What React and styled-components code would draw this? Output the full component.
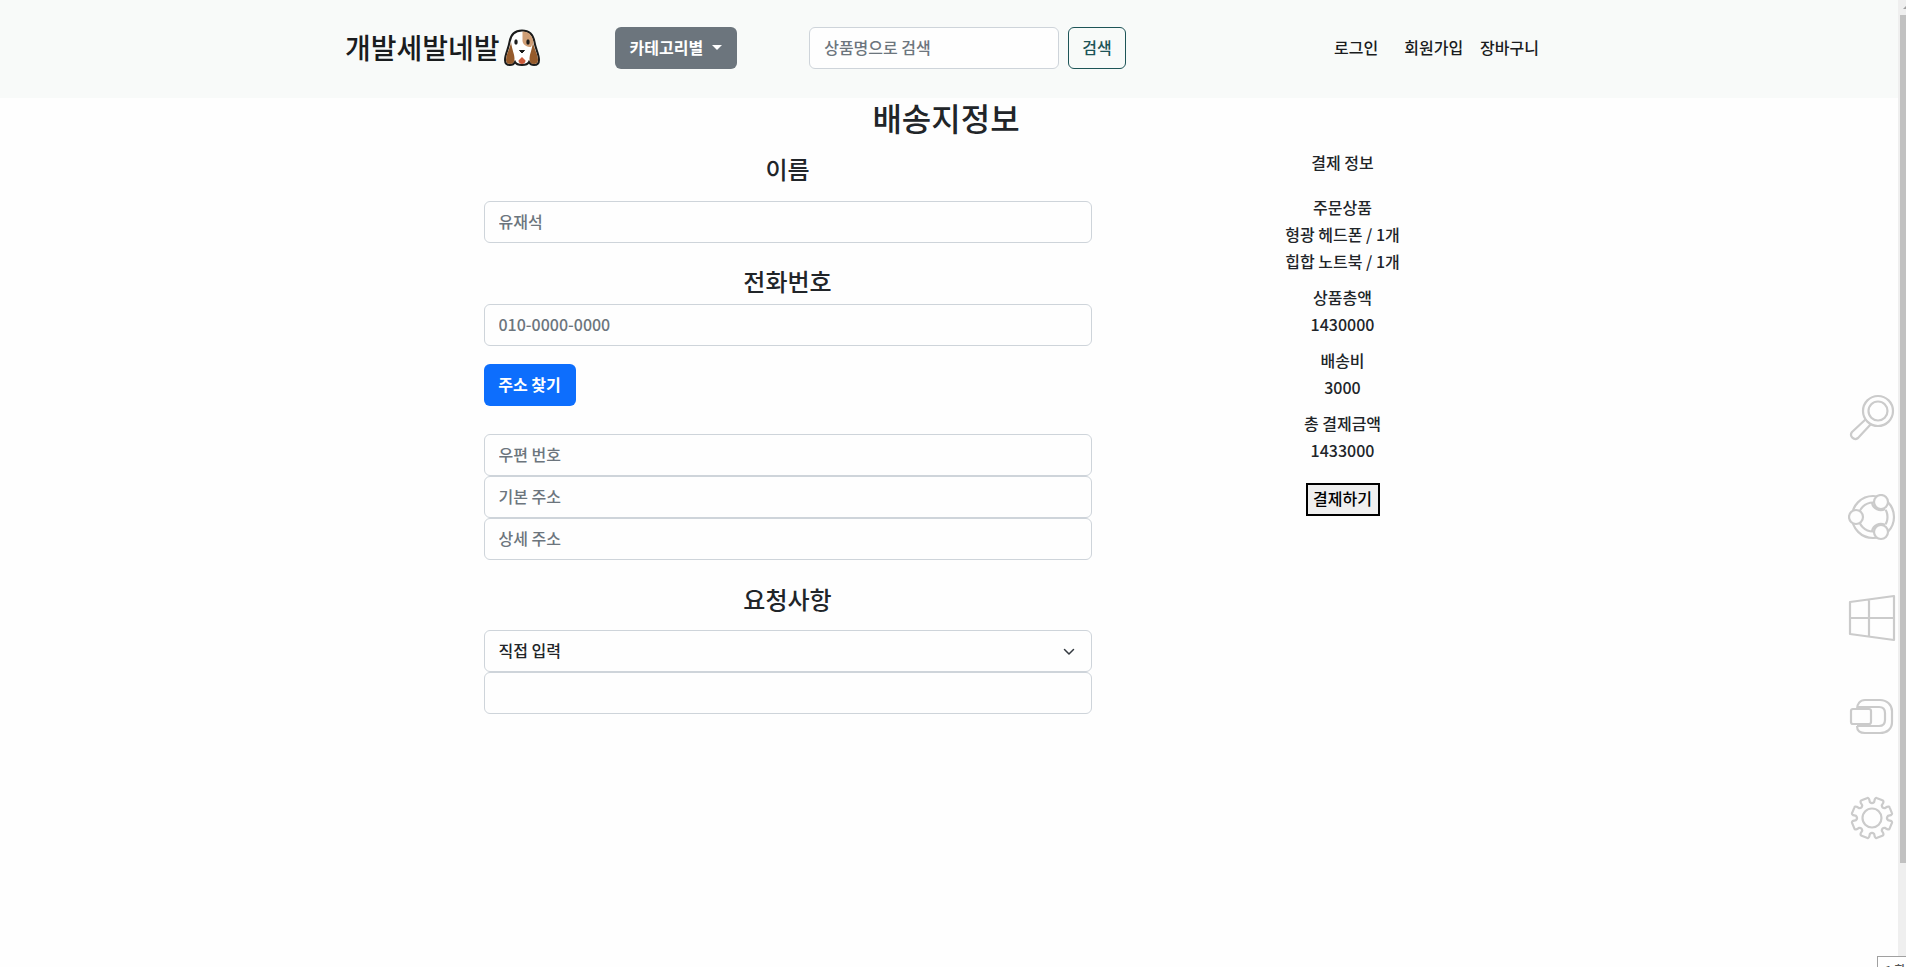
import React, { useState } from "react";
import styled, { createGlobalStyle, css } from "styled-components";

const Global = createGlobalStyle`
  *, *::before, *::after { box-sizing: border-box; }
  html, body { margin: 0; background: #fefefe; }
  body, button, input, select {
    font-family: "Noto Sans CJK KR", "Noto Sans", sans-serif;
    font-size: 16px;
    font-weight: 500;
    line-height: 24px;
    color: #212529;
  }
  h1, h2, p, ul { margin: 0; padding: 0; font-weight: 500; }
`;

const Page = styled.div`
  min-height: 100vh;
  padding-right: 8px;
  overflow: hidden;
`;

const Header = styled.header`
  background: #f8faf9;
`;

const Bar = styled.div`
  display: flex;
  align-items: center;
  width: 100%;
  max-width: 1208px;
  height: 98px;
  margin: 0 auto;
  padding: 0 14px 2px 0;
`;

const Brand = styled.a`
  display: flex;
  align-items: center;
  gap: 4px;
  margin-right: 75px;
  padding-bottom: 2px;
  font-size: 28px;
  line-height: 40px;
  color: #1a1c1e;
  text-decoration: none;
  white-space: nowrap;
`;

const Button = styled.button`
  height: 42px;
  padding: 0 13px 2px;
  border: 1px solid transparent;
  border-radius: 6px;
  white-space: nowrap;
  ${({ $kind }) =>
    $kind === "menu" &&
    css`
      display: flex;
      align-items: center;
      gap: 9px;
      margin-right: 72px;
      padding: 0 14px 2px;
      background: #6c757d;
      color: #fff;
      font-weight: 700;
    `}
  ${({ $kind }) =>
    $kind === "outline" &&
    css`
      background: transparent;
      border-color: #1d5457;
      color: #1d5457;
    `}
  ${({ $kind }) =>
    $kind === "primary" &&
    css`
      align-self: flex-start;
      margin: 18px 0 28px;
      min-width: 92px;
      background: #0d6efd;
      color: #fff;
      font-weight: 700;
    `}
`;

const Caret = styled.span`
  border: 5px solid transparent;
  border-top-color: currentColor;
  border-bottom: 0;
`;

const Search = styled.form`
  display: flex;
  gap: 9px;
`;

const Field = styled.input`
  display: block;
  width: ${({ $width }) => $width || "100%"};
  height: 42px;
  padding: 0 14px 2px;
  border: 1px solid #ced4da;
  border-radius: 6px;
  background: #fefefe;
  outline: none;
  appearance: none;
  &::placeholder { color: #6c757d; opacity: 1; }
`;

const Nav = styled.nav`
  display: flex;
  margin-left: auto;
  padding-bottom: 2px;
  gap: 17px;
`;

const NavLink = styled.a`
  color: #1a1c1e;
  text-decoration: none;
  white-space: nowrap;
  &:first-child { margin-right: 9px; }
`;

const Title = styled.h1`
  padding: 0 6px 4px 0;
  font-size: 32px;
  line-height: 38px;
  text-align: center;
`;

const Columns = styled.main`
  display: grid;
  grid-template-columns: 608px 228px;
  column-gap: 137px;
  justify-content: center;
  padding-left: 42px;
`;

const Form = styled.form`
  display: flex;
  flex-direction: column;
`;

const Label = styled.label`
  padding: ${({ $pad }) => $pad};
  font-size: 24px;
  line-height: 30px;
  text-align: center;
`;

const SelectBox = styled.div`
  position: relative;
  svg {
    position: absolute;
    right: 14px;
    top: 15px;
    pointer-events: none;
  }
`;

const Summary = styled.aside`
  display: flex;
  flex-direction: column;
  align-items: center;
  gap: 9px;
  padding-top: 9px;
  text-align: center;
  line-height: 27px;
`;

const SummaryTitle = styled.h2`
  margin-bottom: 9px;
  font-size: 16px;
  line-height: 27px;
`;

const PayButton = styled.button`
  height: 33px;
  min-width: 74px;
  margin-top: 10px;
  padding: 0 5px 3px;
  border: 2px solid #000;
  background: #efefef;
  color: #000;
  white-space: nowrap;
`;

const Charms = styled.div`
  position: fixed;
  right: 10px;
  top: 394px;
  display: flex;
  flex-direction: column;
  gap: 52px;
  svg { display: block; }
`;

const ScrollTrack = styled.div`
  position: fixed;
  inset: 0 0 0 auto;
  width: 8px;
  padding: 15px 0 104px 2px;
  background: #efefef;
`;

const ScrollThumb = styled.div`
  height: 100%;
  background: #c1c1c1;
`;

const ScrollArrow = styled.svg`
  position: absolute;
  right: 0;
  top: 6px;
`;

const Tip = styled.div`
  position: fixed;
  right: 0;
  bottom: 0;
  width: 29px;
  height: 11px;
  padding: 5px 0 0 7px;
  overflow: hidden;
  border: 1px solid #a0a0a0;
  border-width: 1px 0 0 1px;
  background: #fff;
  color: #555;
  font-size: 12px;
  line-height: 16px;
  white-space: nowrap;
`;

const Dog = () => (
  <svg width="36" height="37" viewBox="0 0 36 37" aria-hidden="true">
    <path d="M18 1.5C10 1.5 6.500 7 5.500 13C4.500 20 1 25 1 31c0 3 2 5 5 5 2.500 0 4-1 5-3 1 2 3 3 7 3s6-1 7-3c1 2 2.500 3 5 3 3 0 5-2 5-5 0-6-3.500-11-4.500-18C29.500 7 26 1.500 18 1.500Z" fill="#fff" stroke="#1c1c1c" strokeWidth="2" />
    <path d="M18.500 2.500c7 0 10 5 11 10.500L27 18c-4 0-8-2-8.500-6Z" fill="#cf9e76" />
    <path d="M7 13C6 20 2 25 2 31c0 2.500 1.500 4 4 4 3 0 4.500-2 4.500-5 0-5-2.500-9-3.500-17ZM29 13c1 7 5 12 5 18 0 2.500-1.500 4-4 4-3 0-4.500-2-4.500-5 0-5 2.500-9 3.500-17Z" fill="#955a2b" />
    <ellipse cx="12" cy="13" rx="1.700" ry="2.800" fill="#1c1c1c" />
    <ellipse cx="24" cy="13" rx="1.700" ry="2.800" fill="#1c1c1c" />
    <path d="M15.500 21.500h5L18 24Z" fill="#1c1c1c" stroke="#1c1c1c" strokeLinejoin="round" />
    <path d="M18 28l3.500 3.500c0 2-1.500 3.500-3.500 3.500s-3.500-1.500-3.500-3.500Z" fill="#cb5a3a" />
  </svg>
);

const Charm = ({ children }) => (
  <svg width="48" height="48" viewBox="0 0 48 48" fill="none" stroke="#cbcbcb" strokeWidth="2.2" strokeLinejoin="round" aria-hidden="true">
    {children}
  </svg>
);

const gearPoints = () => {
  let d = "";
  for (let i = 0; i < 8; i++) {
    const at = (deg, r) => {
      const a = ((i * 45 + 22.5 + deg) * Math.PI) / 180;
      return `${(24 + r * Math.cos(a)).toFixed(2)} ${(24 + r * Math.sin(a)).toFixed(2)}`;
    };
    d += `${i ? "L" : "M"}${at(-15, 16)}L${at(-14, 19)}Q${at(-12, 21)} ${at(-8, 20.5)}L${at(8, 20.5)}Q${at(12, 21)} ${at(14, 19)}L${at(15, 16)}Q${at(22.5, 14)} ${at(30, 16)}`;
  }
  return d + "Z";
};

const groups = [
  ["주문상품", "형광 헤드폰 / 1개", "힙합 노트북 / 1개"],
  ["상품총액", "1430000"],
  ["배송비", "3000"],
  ["총 결제금액", "1433000"],
];

export default function App() {
  const [request, setRequest] = useState("직접 입력");
  return (
    <Page>
      <Global />
      <Header>
        <Bar>
          <Brand href="#home">
            개발세발네발
            <Dog />
          </Brand>
          <Button type="button" $kind="menu">
            카테고리별 <Caret />
          </Button>
          <Search onSubmit={(e) => e.preventDefault()}>
            <Field $width="250px" type="search" placeholder="상품명으로 검색" aria-label="상품명으로 검색" />
            <Button $kind="outline">검색</Button>
          </Search>
          <Nav>
            <NavLink href="#login">로그인</NavLink>
            <NavLink href="#join">회원가입</NavLink>
            <NavLink href="#cart">장바구니</NavLink>
          </Nav>
        </Bar>
      </Header>
      <Title>배송지정보</Title>
      <Columns>
        <Form onSubmit={(e) => e.preventDefault()}>
          <Label htmlFor="name" $pad="14px 0 17px">이름</Label>
          <Field id="name" placeholder="유재석" />
          <Label htmlFor="phone" $pad="23px 0 8px">전화번호</Label>
          <Field id="phone" placeholder="010-0000-0000" />
          <Button type="button" $kind="primary">주소 찾기</Button>
          <Field placeholder="우편 번호" aria-label="우편 번호" />
          <Field placeholder="기본 주소" aria-label="기본 주소" />
          <Field placeholder="상세 주소" aria-label="상세 주소" />
          <Label htmlFor="request" $pad="24px 0 16px">요청사항</Label>
          <SelectBox>
            <Field as="select" id="request" value={request} onChange={(e) => setRequest(e.target.value)}>
              <option>직접 입력</option>
            </Field>
            <svg width="18" height="14" viewBox="0 0 18 14" fill="none" stroke="#343a40" strokeWidth="1.5" strokeLinecap="round" strokeLinejoin="round" aria-hidden="true">
              <path d="M4.500 4.500l4.500 4.500 4.500-4.500" />
            </svg>
          </SelectBox>
          <Field aria-label="요청사항 입력" />
        </Form>
        <Summary>
          <SummaryTitle>결제 정보</SummaryTitle>
          {groups.map((lines) => (
            <div key={lines[0]}>
              {lines.map((line) => (
                <p key={line}>{line}</p>
              ))}
            </div>
          ))}
          <PayButton type="button">결제하기</PayButton>
        </Summary>
      </Columns>
      <Charms>
        <Charm>
          <circle cx="30" cy="17" r="15" />
          <circle cx="30" cy="17" r="9.500" />
          <path d="M18 25L4 38c-3 4 2 9 6 6L23 30" />
        </Charm>
        <Charm>
          <circle cx="25" cy="23" r="21" />
          <circle cx="25" cy="23" r="14.500" />
          <path d="M25 8A9 9 0 0 0 39 15L34 6ZM25 38A9 9 0 0 1 39 31L34 40Z" fill="#fefefe" stroke="none" />
          <path d="M24 9A9 9 0 0 0 37 15M24 37A9 9 0 0 1 37 31" />
          <g fill="#fefefe">
            <circle cx="8" cy="23" r="7" />
            <circle cx="33" cy="8" r="7" />
            <circle cx="33" cy="38" r="7" />
          </g>
        </Charm>
        <Charm>
          <path d="M2 8L46 2V46L2 40ZM21 6V42M2 24H46" />
        </Charm>
        <Charm>
          <path d="M9 15C9 10 12 6 17 6H32C39 6 44 11 44 17V28C44 35 39 39 32 39H17C12 39 9 37 9 32" />
          <path d="M9 13H31C35 13 37 15 37 19V26C37 30 35 32 31 32H9" />
          <rect x="3" y="15" width="20" height="15" rx="2" fill="#fefefe" />
        </Charm>
        <Charm>
          <path d={gearPoints()} />
          <circle cx="24" cy="24" r="9.500" />
        </Charm>
      </Charms>
      <ScrollTrack>
        <ScrollArrow width="3" height="3" viewBox="0 0 3 3" aria-hidden="true">
          <path d="M0 3L3 0V3Z" fill="#a0a0a0" />
        </ScrollArrow>
        <ScrollThumb />
      </ScrollTrack>
      <Tip>1 화</Tip>
    </Page>
  );
}
